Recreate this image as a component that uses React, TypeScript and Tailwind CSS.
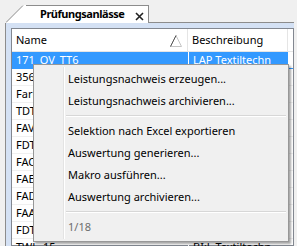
import { ReactNode } from 'react';

const rows: [string, string][] = [
    ['171_OV_TT6', 'LAP Textiltechn'],
    ['3561_LAP', 'LAP Textilchemie'],
    ['Farb_Test', 'Farbtest'],
    ['TDT_01', 'Teildiplom'],
    ['FAV_22', 'Fachausweis'],
    ['FDT_21', 'Fachdiplom'],
    ['FAC_20', 'Fachausweis'],
    ['FAE_19', 'Fachausweis'],
    ['FAD_18', 'Fachausweis'],
    ['FAA_17', 'Fachausweis'],
    ['FDT_16', 'Fachdiplom'],
    ['TWL_15', 'BI:L Textiltechn'],
];

function MenuItem({ children }: { children: ReactNode }) {
    return <div className="flex h-[22px] items-center pl-[34px] whitespace-nowrap">{children}</div>;
}

function Separator() {
    return <div className="my-[3px] ml-[32px] mr-[2px] border-t border-b border-t-[#d7d7d7] border-b-white" />;
}

export default function App() {
    return (
        <div className="relative h-[246px] w-[297px] overflow-hidden bg-[#f0f0f0] text-[11px] text-black" style={{ fontFamily: '"Noto Sans", "Open Sans", sans-serif' }}>
            {/* Tab strip */}
            <div className="relative h-[23px]">
                <div className="absolute top-[5px] left-[6px] flex h-[18px] w-[143px] items-center">
                    <svg width="20" height="18" className="shrink-0">
                        <polygon points="0,18 17,0 20,0 20,18" fill="white" />
                        <line x1="0" y1="17.5" x2="17" y2="0.5" stroke="#8c8c8c" />
                    </svg>
                    <div className="relative flex h-full flex-1 items-center border-t border-r border-[#8c8c8c] bg-white pl-[14px]">
                        <span className="text-[11px] font-bold tracking-[-0.45px]">Prüfungsanlässe</span>
                        <svg width="9" height="9" className="absolute top-[6px] right-[4px]">
                            <path d="M1,1 L8,8 M8,1 L1,8" stroke="#222" strokeWidth="1.6" />
                        </svg>
                    </div>
                </div>
                <div className="absolute bottom-0 left-[149px] right-[3px] h-px bg-[#8c8c8c]" />
            </div>

            {/* Pane */}
            <div className="ml-[5px] mr-[3px] h-[223px] border-l border-[#8c8c8c] bg-[#d4e1f4] pl-[5px] pt-[5px]">
                <div className="h-full border border-[#828790] bg-white">
                    {/* Header */}
                    <div className="flex h-[23px] items-center border-b border-[#e5e5e5]">
                        <div className="relative flex h-full w-[176px] items-center border-r border-[#e5e5e5] pl-[4px]">
                            Name
                            <svg width="12" height="12" className="absolute right-[5px] top-[6px]">
                                <polygon points="6,0.5 11.5,11.5 0.5,11.5" fill="none" stroke="#c4c4c4" />
                                <line x1="6" y1="0.5" x2="0.5" y2="11.5" stroke="#555" />
                            </svg>
                        </div>
                        <div className="flex h-full w-[100px] items-center border-r border-[#e5e5e5] pl-[4px]">Beschreibung</div>
                    </div>
                    {rows.map(([name, desc], i) => (
                        <div key={i} className={`flex h-[17px] items-center border-b ${i === 0 ? 'border-[#3399ff]' : 'border-[#f0f0f0]'}`}>
                            <div className={`flex h-full w-[176px] items-center pl-[4px] ${i === 0 ? 'bg-[#3399ff] text-white' : ''}`}>{name}</div>
                            <div className={`flex h-full w-[100px] items-center overflow-hidden border-l border-white pl-[4px] whitespace-nowrap ${i === 0 ? 'bg-[#3399ff] text-white' : ''}`}>{desc}</div>
                        </div>
                    ))}
                </div>
            </div>

            {/* Context menu */}
            <div className="absolute top-[64px] left-[33px] w-[256px] border border-[#979797] bg-[#f0f0f0] py-[3px] shadow-[2px_2px_2px_rgba(0,0,0,0.35)]">
                <div className="absolute top-[2px] bottom-[2px] left-[29px] w-[2px] border-l border-[#e3e3e3] border-r border-r-white" />
                <div className="relative">
                    <MenuItem>Leistungsnachweis erzeugen...</MenuItem>
                    <MenuItem>Leistungsnachweis archivieren...</MenuItem>
                    <Separator />
                    <MenuItem>Selektion nach Excel exportieren</MenuItem>
                    <MenuItem>Auswertung generieren...</MenuItem>
                    <MenuItem>Makro ausführen...</MenuItem>
                    <MenuItem>Auswertung archivieren...</MenuItem>
                    <Separator />
                    <div className="flex h-[22px] items-center pl-[34px] text-[#6d6d6d]">1/18</div>
                </div>
            </div>
        </div>
    );
}
